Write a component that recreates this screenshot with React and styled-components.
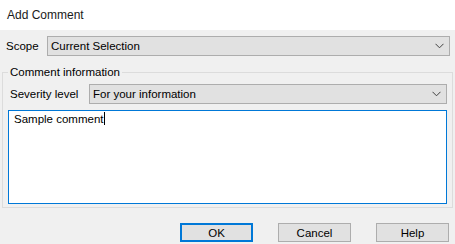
import React from 'react';
import styled, { createGlobalStyle } from 'styled-components';

const GlobalStyle = createGlobalStyle`
  html, body {
    margin: 0;
    padding: 0;
    background: #f0f0f0;
  }
  body {
    font-family: "Liberation Sans", Arial, sans-serif;
    font-size: 11.5px;
    color: #000;
  }
`;

const Window = styled.div`
  width: 455px;
  height: 244px;
  display: flex;
  flex-direction: column;
  background: #f0f0f0;
  overflow: hidden;
`;

const TitleBar = styled.div`
  height: 30px;
  line-height: 30px;
  padding-left: 7px;
  background: #fff;
  font-size: 12px;
  color: #1a1a1a;
`;

const ScopeRow = styled.div`
  display: flex;
  align-items: center;
  margin: 6px 5px 0 6px;
  height: 20px;
`;

const Label = styled.span`
  box-sizing: border-box;
  width: ${(p) => p.width}px;
  padding-left: ${(p) => p.indent || 0}px;
  flex-shrink: 0;
  white-space: nowrap;
`;

const Combo = styled.div`
  flex: 1;
  height: 20px;
  box-sizing: border-box;
  border: 1px solid #adadad;
  background: #e1e1e1;
  display: flex;
  align-items: center;
  justify-content: space-between;
  padding: 0 5px 0 3px;
  white-space: nowrap;
`;

const Chevron = () => (
  <svg width="9" height="6" viewBox="0 0 9 6">
    <polyline points="0.5,0.8 4.5,4.8 8.5,0.8" fill="none" stroke="#404040" strokeWidth="1" />
  </svg>
);

const GroupBox = styled.fieldset`
  margin: 9px 2px 0 2px;
  padding: 0 5px 3px 5px;
  border: 1px solid #dcdcdc;
  min-width: 0;
`;

const Legend = styled.legend`
  padding: 0 2px;
  line-height: 14px;
`;

const SeverityRow = styled.div`
  display: flex;
  align-items: center;
  margin-top: 5px;
  height: 20px;
`;

const CommentBox = styled.div`
  margin-top: 6px;
  height: 94px;
  box-sizing: border-box;
  border: 1px solid #0078d7;
  background: #fff;
  padding: 1px 5px;
  line-height: 14px;
  white-space: pre-wrap;
`;

const Caret = styled.span`
  display: inline-block;
  width: 0;
  height: 13px;
  margin-left: 1px;
  border-left: 1px solid #000;
  vertical-align: -2px;
`;

const ButtonRow = styled.div`
  display: flex;
  justify-content: flex-end;
  gap: 25px;
  margin: 15px 6px 0 0;
`;

const Button = styled.button`
  width: 73px;
  height: 19px;
  box-sizing: border-box;
  padding: 0;
  font: inherit;
  color: #000;
  background: #e1e1e1;
  border: ${(p) => (p.$default ? '2px solid #0078d7' : '1px solid #adadad')};
  border-radius: 0;
  outline: none;
`;

export default function App() {
  return (
    <>
      <GlobalStyle />
      <Window>
        <TitleBar>Add Comment</TitleBar>
        <ScopeRow>
          <Label width={41}>Scope</Label>
          <Combo>
            <span>Current Selection</span>
            <Chevron />
          </Combo>
        </ScopeRow>
        <GroupBox>
          <Legend>Comment information</Legend>
          <SeverityRow>
            <Label width={81} indent={2}>Severity level</Label>
            <Combo>
              <span>For your information</span>
              <Chevron />
            </Combo>
          </SeverityRow>
          <CommentBox>
            Sample comment<Caret />
          </CommentBox>
        </GroupBox>
        <ButtonRow>
          <Button $default type="button">OK</Button>
          <Button type="button">Cancel</Button>
          <Button type="button">Help</Button>
        </ButtonRow>
      </Window>
    </>
  );
}
